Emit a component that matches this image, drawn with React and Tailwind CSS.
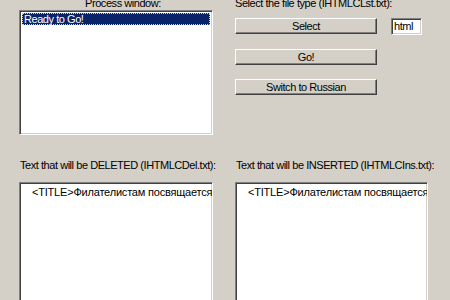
import React from "react";

const sunken =
  "border border-t-[#808080] border-l-[#808080] border-b-white border-r-white shadow-[inset_1px_1px_0_#404040,inset_-1px_-1px_0_#d4d0c8] bg-white";
const raised =
  "border border-t-white border-l-white border-b-[#404040] border-r-[#404040] shadow-[inset_-1px_-1px_0_#808080] bg-[#d4d0c8]";

function Button({ children, className = "" }) {
  return (
    <button className={`${raised} h-[16px] w-[142px] flex items-center justify-center leading-none ${className}`}>
      {children}
    </button>
  );
}

function TextPanel({ label, className = "" }) {
  return (
    <div className={`flex flex-col ${className}`}>
      <div className="h-[13px] leading-[13px] pl-[1px] whitespace-nowrap">{label}</div>
      <div className={`${sunken} mt-[10px] h-[130px] pt-[3px] pl-[12px] overflow-hidden`}>
        <div className="whitespace-nowrap leading-[13px] tracking-[-0.2px]">&lt;TITLE&gt;Филателистам посвящается</div>
      </div>
    </div>
  );
}

export default function App() {
  return (
    <div className="w-[450px] h-[300px] overflow-hidden bg-[#d4d0c8] text-black text-[11px] tracking-[-0.45px] font-['Liberation_Sans',Arial,sans-serif]">
      <div className="flex pl-[19px]">
        <div className="w-[194px] flex flex-col">
          <div className="h-[10px] -mt-[3px] mb-[3px] leading-[13px] text-center pl-[14px]">Process window:</div>
          <div className={`${sunken} h-[125px] p-[2px]`}>
            <div className="h-[12px] bg-[#0a246a] text-white leading-[12px] pl-[2px] outline outline-1 outline-dotted outline-[#d4d0c8] -outline-offset-1">
              Ready to Go!
            </div>
          </div>
        </div>

        <div className="ml-[22px] flex flex-col">
          <div className="h-[10px] -mt-[3px] mb-[3px] leading-[13px] whitespace-nowrap">
            Select the file type (IHTMLCLst.txt):
          </div>
          <div className="flex items-start mt-[8px]">
            <Button>Select</Button>
            <div className={`${sunken} ml-[14px] w-[31px] h-[17px] leading-[13px] pl-[2px] pt-[1px]`}>html</div>
          </div>
          <Button className="mt-[14px]">Go!</Button>
          <Button className="mt-[14px]">Switch to Russian</Button>
        </div>
      </div>

      <div className="flex pl-[19px] mt-[24px]">
        <TextPanel label="Text that will be DELETED (IHTMLCDel.txt):" className="w-[194px]" />
        <TextPanel label="Text that will be INSERTED (IHTMLCIns.txt):" className="w-[193px] ml-[22px]" />
      </div>
    </div>
  );
}
